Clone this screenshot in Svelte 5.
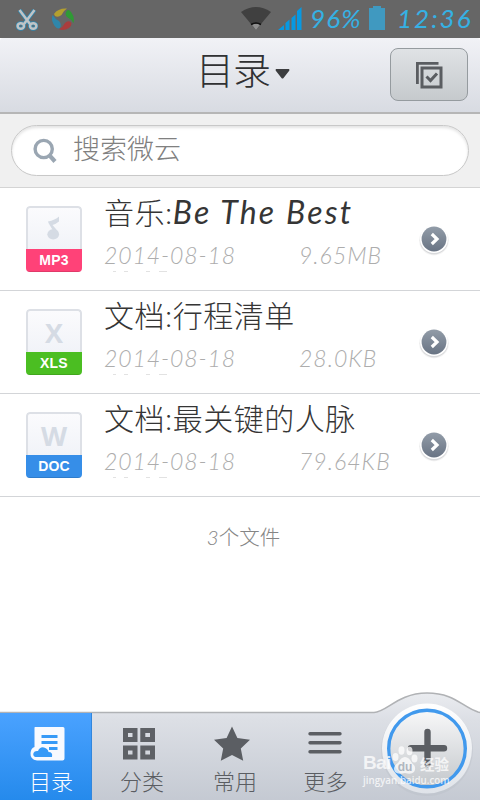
<script>
  const files = [
    { kind: 'mp3', label: 'MP3', title: '音乐:', latin: 'Be The Best', date: '2014-08-18', size: '9.65MB' },
    { kind: 'xls', label: 'XLS', title: '文档:行程清单', latin: '', date: '2014-08-18', size: '28.0KB' },
    { kind: 'doc', label: 'DOC', title: '文档:最关键的人脉', latin: '', date: '2014-08-18', size: '79.64KB' }
  ];

  const tabs = [
    { id: 'dir', label: '目录' },
    { id: 'sort', label: '分类' },
    { id: 'fav', label: '常用' },
    { id: 'more', label: '更多' }
  ];

  let active = $state('dir');
</script>

<div class="screen">
  <div class="status">
    <svg class="scissors" width="22" height="22" viewBox="0 0 22 22">
      <g fill="none" stroke="#2f87b0" stroke-width="4">
        <path d="M3.5 1 L14 15 M18.5 1 L8 15" />
        <ellipse cx="4.8" cy="17" rx="3.2" ry="2.8" /><ellipse cx="17.2" cy="17" rx="3.2" ry="2.8" />
      </g>
      <g fill="none" stroke="#c0c4c6" stroke-width="2.5">
        <path d="M3.5 1 L14 15 M18.5 1 L8 15" />
        <ellipse cx="4.8" cy="17" rx="3.2" ry="2.8" /><ellipse cx="17.2" cy="17" rx="3.2" ry="2.8" />
      </g>
    </svg>
    <svg class="pinwheel" width="22" height="22" viewBox="0 0 22 22">
      <path fill="#b3a02f" d="M2 6 Q6 0 15 .5 Q11 3 9.5 7 Q6 10 3 8 Z" />
      <path fill="#2f9a35" d="M14 4 Q16 0 19 4 Q23 9 21.5 15 Q19 11 15 9 Q13 7 14 4 Z" />
      <path fill="#2f86aa" d="M.7 7 Q3 11 7 13 Q10 16 8 20 Q4 22 1 15 Q-1 11 .7 7 Z" />
      <path fill="#ab3d3d" d="M7 21.3 Q11 19 13 15 Q16 12 19 14.5 Q20.5 17 17 20 Q12 23 7 21.3 Z" />
    </svg>
    <span class="grow"></span>
    <svg class="wifi" width="30" height="23" viewBox="0 0 30 23">
      <path fill="#404040" d="M0 5 Q15 -5 30 5 L15 23 Z" />
      <path fill="#909090" d="M11 18 Q15 15 19 18 L15 23 Z" />
      <path fill="none" stroke="#111" stroke-width="1.5" d="M10 17.5 Q15 14.5 20 17.5" />
    </svg>
    <svg class="signal" width="24" height="23" viewBox="0 0 24 23">
      <path fill="#0699e2" d="M0 23 L6 18 V23 Z M7.5 16 L11.5 12.5 V23 H7.5 Z M13.5 11 L17.5 7.5 V23 H13.5 Z M19 4 L23.5 0 V23 H19 Z" />
    </svg>
    <span class="percent">96%</span>
    <svg class="battery" width="16" height="24" viewBox="0 0 16 24">
      <path fill="#4099c0" d="M4 0 H12 V2 H16 V24 H0 V2 H4 Z" />
    </svg>
    <span class="clock">12:36</span>
  </div>

  <header class="header">
    <h1 class="heading">目录</h1>
    <svg class="caret" width="15" height="10" viewBox="0 0 15 10"><path fill="#3c3d3f" d="M1 0 H14 Q15 1 14 2 L8.5 9 Q7.5 10 6.5 9 L1 2 Q0 1 1 0 Z" /></svg>
    <button class="select" aria-label="select">
      <svg width="28" height="28" viewBox="0 0 28 28" fill="none" stroke="#5a5d61">
        <path stroke-width="2.8" d="M2.4 23 V2.4 H23.5" />
        <rect x="7" y="7" width="19" height="19" stroke-width="3" />
        <path stroke-width="3" d="M11.5 15.5 L15.5 19.5 L22 12.5" />
      </svg>
    </button>
  </header>

  <div class="search-bar">
    <div class="search">
      <svg width="24" height="26" viewBox="0 0 24 26" fill="none" stroke="#9aa6b2">
        <circle cx="10.7" cy="11" r="8.6" stroke-width="3.4" />
        <path stroke-width="4.2" d="M16.5 17.3 L22 23.5" />
      </svg>
      <span>搜索微云</span>
    </div>
  </div>

  <ul class="list">
    {#each files as file}
      <li class="row">
        <div class="icon">
          <div class="sheet">
            {#if file.kind === 'mp3'}
              <svg width="14" height="24" viewBox="0 0 14 24" fill="#d5dbe4">
                <ellipse cx="6.2" cy="18.3" rx="5.9" ry="5.1" />
                <path d="M1 5.5 Q8 4 12 .5 V5.5 Q9 8 5.5 9 L11.5 16 L8 18 L1.5 7 Z" />
              </svg>
            {:else}
              {file.kind === 'xls' ? 'X' : 'W'}
            {/if}
          </div>
          <div class="tag {file.kind}">{file.label}</div>
        </div>
        <div class="info">
          <div class="title">{file.title}{#if file.latin}<span class="latin">{file.latin}</span>{/if}</div>
          <div class="meta"><span class="date">{file.date}</span><span class="size">{file.size}</span></div>
          <svg class="clip" width="60" height="2" viewBox="0 0 60 2"><path stroke="#e2e2e2" d="M6 .5 H9 M17 .5 H21 M39 .5 H43 M52 .5 H61" /></svg>
        </div>
        <svg class="go" width="32" height="34" viewBox="0 0 32 34">
          <defs>
            <linearGradient id="go-{file.kind}" x1="0" y1="0" x2="0" y2="1">
              <stop offset="0" stop-color="#929ca8" /><stop offset="1" stop-color="#697484" />
            </linearGradient>
          </defs>
          <circle cx="16" cy="17.5" r="15" fill="#f5f5f5" />
          <circle cx="16" cy="17.3" r="14.2" fill="#d9dadc" />
          <circle cx="16" cy="16" r="14" fill="#fff" />
          <circle cx="16" cy="16" r="12.4" fill="url(#go-{file.kind})" />
          <path d="M13.8 11 L19 16 L13.8 21" fill="none" stroke="#fff" stroke-width="3.2" />
        </svg>
      </li>
    {/each}
  </ul>

  <p class="count"><i>3</i>个文件</p>

  <nav class="bottom">
    <svg class="hump" width="480" height="110" viewBox="0 0 480 110">
      <defs>
        <linearGradient id="bar" x1="0" y1="0" x2="0" y2="1">
          <stop offset="0" stop-color="#eaecf0" /><stop offset=".25" stop-color="#dcdfe5" /><stop offset="1" stop-color="#c4c9d2" />
        </linearGradient>
        <linearGradient id="knob" x1="0" y1="0" x2="0" y2="1">
          <stop offset="0" stop-color="#f8f8f9" /><stop offset="1" stop-color="#c4c8cc" />
        </linearGradient>
        <linearGradient id="rim" x1="0" y1="0" x2="0" y2="1">
          <stop offset="0" stop-color="#fff" /><stop offset="1" stop-color="#dfe3e9" />
        </linearGradient>
      </defs>
      <path fill="url(#bar)" stroke="#b0b2b5" stroke-width="1.6" d="M-2 22.5 H374 C387 22 398 3 427 3 C455 3 462 17 478 22 L482 23 V112 H-2 Z" />
      <circle cx="427" cy="60" r="46" fill="#b7bdc7" opacity=".35" />
      <circle cx="427" cy="58.5" r="45" fill="url(#rim)" />
      <circle cx="427" cy="58.5" r="38.3" fill="url(#knob)" stroke="#4199ed" stroke-width="3.4" />
      <path d="M427.5 42 V74 M411 58.3 H444" stroke="#5b5e63" stroke-width="6.4" stroke-linecap="round" />
    </svg>
    <div class="tabs">
      {#each tabs as tab}
        <button class="tab" class:active={active === tab.id} onclick={() => (active = tab.id)}>
          {#if tab.id === 'dir'}
            <svg width="36" height="36" viewBox="0 0 36 36">
              <path fill="#f8faff" d="M5 1 H33 Q34.5 1 34.5 2.5 V32.5 Q34.5 34.5 32.5 34.5 H7 Q0 33.5 .5 27 Q1 22 4.5 21 V2 Q4.5 1 5 1 Z" />
              <path stroke="#379af7" stroke-width="3" d="M11.5 10.5 H27.5 M11.5 16.5 H27.5 M19 22.5 H27.5" />
              <path fill="#379af7" stroke="#f8faff" stroke-width="2" paint-order="stroke" d="M5.5 31 Q2.5 30 3.5 27 Q4.5 24.5 8 25 Q10 20.5 14 21.5 Q18 22.5 18.5 26 Q23 26 22 31 Z" />
            </svg>
          {:else if tab.id === 'sort'}
            <svg width="36" height="36" viewBox="0 0 36 36" fill="none" stroke="#5e6166" stroke-width="5">
              <path d="M4.5 4.5 H14 V13.5 H4.5 Z M21.8 4.5 H31.5 V13.5 H21.8 Z M4.5 22 H14 V31 H4.5 Z M21.8 22 H31.5 V31 H21.8 Z" />
            </svg>
          {:else if tab.id === 'fav'}
            <svg width="36" height="36" viewBox="0 0 36 36">
              <path fill="#5b5e63" d="M18 .5 L23.4 12 L36 13.8 L26.8 22.6 L29.2 34.8 L18 29 L6.8 34.8 L9.2 22.6 L0 13.8 L12.6 12 Z" />
            </svg>
          {:else}
            <svg width="36" height="36" viewBox="0 0 36 36">
              <path stroke="#5b5e63" stroke-width="3.4" stroke-linecap="round" d="M3 7.7 H33 M3 16.7 H33 M3 25.7 H33" />
            </svg>
          {/if}
          <span class={tab.id}>{tab.label}</span>
        </button>
      {/each}
    </div>
    <div class="mark">
      <div class="brand">
        <span class="bai">Bai</span>
        <svg width="26" height="28" viewBox="0 0 26 28" fill="#fff">
          <ellipse cx="3.5" cy="11" rx="3" ry="4" /><ellipse cx="9.5" cy="4.5" rx="3" ry="4.2" />
          <ellipse cx="17.5" cy="5" rx="3" ry="4.2" /><ellipse cx="22.5" cy="12.5" rx="3" ry="4" />
          <path d="M13 11 Q17 11 20 17 Q25 21 22 26 Q19 29 13 27 Q6 29 3 26 Q0 21 6 17 Q9 11 13 11 Z" />
          <text x="13" y="25" text-anchor="middle" font-family="Liberation Sans" font-size="12" font-weight="bold" fill="#a5adb8">du</text>
        </svg>
        <span class="jy">经验</span>
      </div>
      <div class="url">jingyan.baidu.com</div>
    </div>
  </nav>
</div>

<style>
  :global(body) {
    background: #000;
  }

  .screen {
    display: flex;
    flex-direction: column;
    width: 480px;
    height: 800px;
    overflow: hidden;
    background: #fff;
    font-family: Lato, "Noto Sans CJK SC", sans-serif;
    font-weight: 300;
  }

  .status {
    display: flex;
    box-sizing: border-box;
    height: 38px;
    padding: 7px 8px 0 16px;
    background: #666;
    color: #35b1e4;
    font-size: 26px;
    line-height: 22px;
    font-style: italic;
    font-weight: 400;
    white-space: nowrap;
  }

  .scissors { margin: 2px 14px 0 0; }
  .pinwheel { margin-top: 1px; }
  .grow { flex: 1; }
  .wifi { margin-right: 7px; }
  .signal { margin-right: 8px; }
  .percent { width: 59px; letter-spacing: 1.2px; }
  .battery { margin-right: 12px; margin-top: -1px; }
  .clock { width: 75px; letter-spacing: 2px; }

  .header {
    display: flex;
    align-items: center;
    box-sizing: border-box;
    height: 76px;
    padding: 0 12px 0 196px;
    background: linear-gradient(#f1f2f6, #d8dbe2);
    border-bottom: 2px solid #b6b6b6;
    border-radius: 3px 3px 0 0;
  }

  .heading {
    margin: 0 0 12px;
    font-size: 38px;
    line-height: 50px;
    font-weight: 300;
    letter-spacing: -1px;
    color: #303133;
  }

  .caret { margin: -2px 0 0 5px; }

  .select {
    display: flex;
    align-items: center;
    justify-content: center;
    box-sizing: border-box;
    width: 78px;
    height: 53px;
    margin: -1px 0 0 auto;
    padding: 0;
    border: 1px solid #959b9f;
    border-radius: 8px;
    background: linear-gradient(#dfe2e5, #c6cacd);
  }

  .search-bar {
    box-sizing: border-box;
    height: 74px;
    padding: 11px 11px 0;
    background: #f0f0f0;
    border-bottom: 1px solid #d4d4d4;
  }

  .search {
    display: flex;
    align-items: center;
    box-sizing: border-box;
    height: 51px;
    padding-left: 21px;
    border: 1px solid #c8c8c8;
    border-radius: 26px;
    background: #fff;
    box-shadow: inset 0 2px 3px #e4e4e4;
    color: #808080;
    font-size: 27px;
    line-height: 40px;
  }

  .search span { margin: -4px 0 0 16px; }

  .list {
    margin: 0;
    padding: 0;
    list-style: none;
  }

  .row {
    display: flex;
    box-sizing: border-box;
    height: 103px;
    padding-left: 26px;
    border-bottom: 1px solid #d3d5d8;
  }

  .icon {
    box-sizing: border-box;
    width: 56px;
    height: 66px;
    margin-top: 18px;
    border-radius: 4px;
    overflow: hidden;
  }

  .sheet {
    display: flex;
    align-items: center;
    justify-content: center;
    box-sizing: border-box;
    height: 43px;
    padding-top: 2px;
    border: 2px solid #dde0e6;
    border-bottom: 0;
    border-radius: 4px 4px 0 0;
    background: linear-gradient(#fbfbfd, #f1f3f8);
    color: #d5dbe4;
    font: bold 27px/38px "Open Sans", sans-serif;
  }

  .tag {
    height: 23px;
    color: #fff;
    font: bold 14px/22px "Liberation Sans", sans-serif;
    text-align: center;
    letter-spacing: .2px;
    box-shadow: inset 0 -1px 0 rgba(0, 0, 0, .12);
  }

  .mp3 { background: #ff4278; }
  .xls { background: #4bbe22; }
  .doc { background: #368ee8; }

  .sheet svg { margin-bottom: 3px; }

  .info {
    width: 300px;
    margin-left: 22px;
    white-space: nowrap;
  }

  .title {
    height: 50px;
    font-size: 30px;
    line-height: 48px;
    letter-spacing: .5px;
    color: #353535;
  }

  .latin {
    font-style: italic;
    font-weight: 400;
    font-size: 32px;
    letter-spacing: 2.2px;
  }

  .meta {
    display: flex;
    height: 33px;
    font-size: 23px;
    line-height: 35px;
    font-style: italic;
    font-weight: 300;
    color: #adadad;
  }

  .date { width: 195px; letter-spacing: .9px; }
  .size { letter-spacing: 1px; }
  .clip { display: block; margin-left: 3px; }
  .go { margin: 35px 0 0 14px; }

  .count {
    margin: 0;
    padding: 22px 0 0;
    text-align: center;
    font-size: 20.5px;
    line-height: 36px;
    text-indent: 7px;
    color: #858585;
  }

  .bottom {
    position: relative;
    height: 88px;
    margin-top: auto;
  }

  .hump {
    position: absolute;
    left: 0;
    bottom: 0;
  }

  .tabs {
    position: relative;
    display: flex;
    height: 88px;
  }

  .tab {
    display: flex;
    flex-direction: column;
    align-items: center;
    width: 93px;
    height: 87px;
    margin-top: 1px;
    padding: 13px 0 0;
    border: 0;
    background: none;
    color: #5a5d62;
    font: 300 22px/36px "Noto Sans CJK SC", sans-serif;
  }

  .tab svg { flex: none; }
  .tab span { margin: 0 0 0 7px; background: none; }
  .tab .more { margin-left: 2px; }

  .active {
    width: 92px;
    padding-left: 4px;
    background: linear-gradient(#4aa2ff, #258aec);
    border-right: 1px solid #3286dc;
    color: #fff;
  }

  /* watermark floats over the add button */
  .mark {
    position: absolute;
    left: 363px;
    top: 34px;
    color: #fff;
    opacity: .75;
    font-family: "Liberation Sans", "Noto Sans CJK SC", sans-serif;
    white-space: nowrap;
  }

  .brand {
    display: flex;
    align-items: flex-end;
    height: 28px;
    font: bold 19px/22px "Liberation Sans", sans-serif;
  }

  .brand .bai {
    width: 29px;
    letter-spacing: -.6px;
  }

  .brand .jy {
    margin-left: 2px;
    font: bold 14.5px/21px "Noto Sans CJK SC", sans-serif;
  }

  .url {
    font: 600 9.8px/13px "Open Sans", sans-serif;
  }
</style>
